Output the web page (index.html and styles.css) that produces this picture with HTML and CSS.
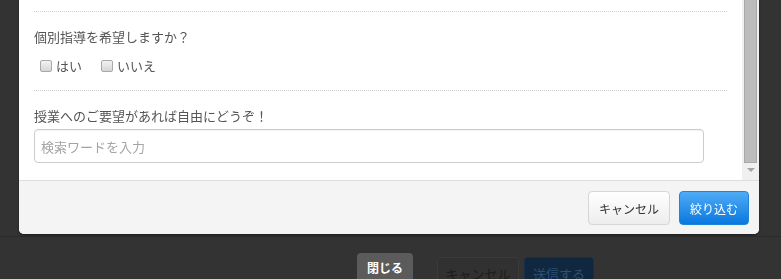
FILE: index.html
```html
<!DOCTYPE html>
<html lang="ja">
<head>
<meta charset="utf-8">
<link rel="stylesheet" href="styles.css">
</head>
<body>
<div class="page">
  <div class="page-main"></div>
  <div class="page-footer">
    <span class="pbtn pbtn-close">閉じる</span>
    <span class="pbtn pbtn-cancel">キャンセル</span>
    <span class="pbtn pbtn-send">送信する</span>
  </div>
</div>

<div class="modal">
  <div class="modal-body">
    <div class="content">
      <div class="section">
        <div class="label">個別指導を希望しますか？</div>
        <div class="checks">
          <label class="check"><span class="box"></span>はい</label>
          <label class="check"><span class="box"></span>いいえ</label>
        </div>
      </div>
      <div class="section last">
        <div class="label">授業へのご要望があれば自由にどうぞ！</div>
        <input class="input" type="text" placeholder="検索ワードを入力">
      </div>
    </div>
    <div class="scrollbar">
      <div class="thumb"></div>
      <div class="arrow"></div>
    </div>
  </div>
  <div class="modal-footer">
    <button class="btn btn-default">キャンセル</button>
    <button class="btn btn-primary">絞り込む</button>
  </div>
</div>
</body>
</html>
```

FILE: styles.css
```css
* { box-sizing: border-box; }
html, body {
  margin: 0;
  height: 279px;
  overflow: hidden;
  background: #333333;
  font-family: "Noto Sans CJK JP", "Noto Sans", sans-serif;
}

.page-main { height: 236px; }
.page-footer {
  border-top: 1px solid #2a2a2a;
  display: flex;
  align-items: flex-start;
  padding-left: 357px;
}
.pbtn {
  display: flex;
  align-items: center;
  justify-content: center;
  font-size: 12px;
  border-radius: 4px 4px 0 0;
  height: 40px;
}
.pbtn-close {
  margin-top: 16px;
  width: 56px;
  background: #5b5b5b;
  color: #ffffff;
  font-weight: bold;
  padding-bottom: 12px;
}
.pbtn-cancel {
  margin-top: 20px;
  margin-left: 24px;
  width: 82px;
  background: #313131;
  border: 1px solid #3a3a3a;
  color: #1c1c1c;
  font-size: 13px;
  padding-bottom: 8px;
}
.pbtn-send {
  margin-top: 20px;
  margin-left: 5px;
  width: 70px;
  background: #0f2840;
  border: 1px solid #143049;
  color: #2d5072;
  font-size: 13px;
  padding-bottom: 8px;
}

.modal {
  position: fixed;
  left: 19px;
  top: 0;
  width: 740px;
  background: #ffffff;
  border-radius: 0 0 5px 5px;
  box-shadow: 0 1px 2px rgba(0,0,0,0.5);
  overflow: hidden;
}
.modal-body {
  display: flex;
  height: 180px;
}
.content {
  flex: 1;
  padding: 11px 15px 0 15px;
  color: #555555;
  font-size: 13px;
}
.section {
  border-top: 1px dotted #cfcfcf;
  padding: 15px 0 14px 0;
}
.section.last { padding-bottom: 0; }
.label {
  line-height: 20px;
}
.checks {
  display: flex;
  gap: 19px;
  margin-top: 9px;
  padding-left: 6px;
  line-height: 20px;
}
.check {
  display: flex;
  align-items: center;
  gap: 4px;
}
.box {
  width: 12px;
  height: 12px;
  border: 1px solid #a8a8a8;
  border-radius: 2px;
  background: linear-gradient(#f2f2f2, #d6d6d6);
}
.input {
  display: block;
  margin-top: 3px;
  width: 670px;
  height: 34px;
  border: 1px solid #cccccc;
  border-radius: 4px;
  padding: 0 6px;
  font-family: inherit;
  font-size: 13px;
  color: #555555;
  box-shadow: inset 0 1px 1px rgba(0,0,0,0.05);
}
.input::placeholder { color: #a4a4a4; }

.scrollbar {
  width: 17px;
  background: #f0f0f0;
  display: flex;
  flex-direction: column;
  align-items: center;
}
.thumb {
  width: 13px;
  height: 163px;
  background: #bcbcbc;
  border: 1px solid #a9a9a9;
  border-top: none;
}
.arrow {
  margin-top: 5px;
  width: 0;
  height: 0;
  border-left: 4px solid transparent;
  border-right: 4px solid transparent;
  border-top: 4px solid #a3a3a3;
}

.modal-footer {
  border-top: 1px solid #dddddd;
  background: #f4f4f4;
  height: 54px;
  display: flex;
  justify-content: flex-end;
  align-items: flex-start;
  gap: 9px;
  padding: 10px 10px 0 0;
}
.btn {
  height: 34px;
  border-radius: 4px;
  font-family: inherit;
  font-size: 12px;
  padding: 0;
}
.btn-default {
  width: 82px;
  background: linear-gradient(#ffffff, #ededed);
  border: 1px solid #d6d6d6;
  color: #333333;
}
.btn-primary {
  width: 70px;
  background: linear-gradient(#50abf6, #0978df);
  border: 1px solid #1f84dc;
  color: #ffffff;
}
```
